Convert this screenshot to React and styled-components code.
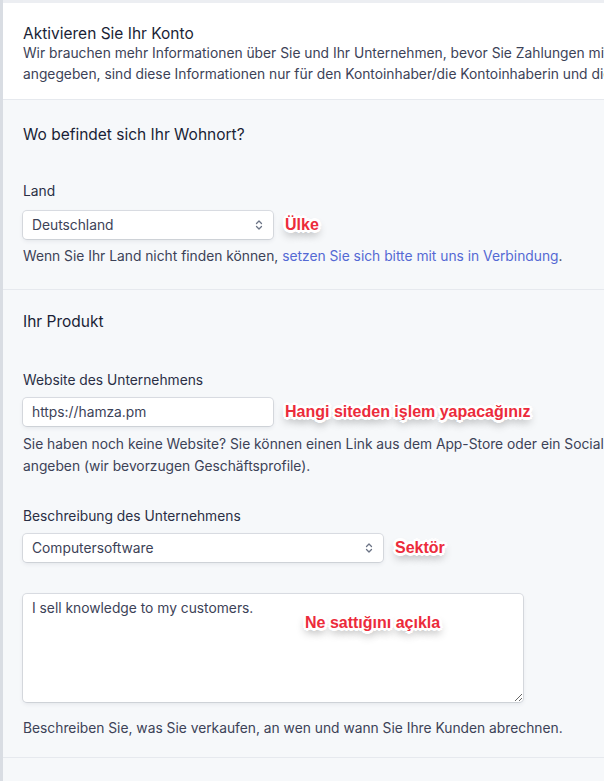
import React from "react";
import styled, { createGlobalStyle } from "styled-components";

const Global = createGlobalStyle`
  html, body { margin: 0; padding: 0; }
  body {
    background: #eceef2;
    font-family: Inter, "Noto Sans", sans-serif;
    overflow: hidden;
    width: 604px;
    height: 781px;
  }
`;

const Frame = styled.div`
  padding-top: 3px;
  padding-left: 3px;
  height: 778px;
  background: linear-gradient(to right, #d9dde3 0 3px, #eceef2 3px);
  overflow: hidden;
`;

const Card = styled.div`
  width: 800px;
  background: #f6f8fa;
  min-height: 800px;
`;

const Intro = styled.div`
  background: #fff;
  padding: 21px 20px 14px 20px;
  border-bottom: 1px solid #e6e9ee;
`;

const Title = styled.h1`
  margin: 0;
  font-size: 15.5px;
  line-height: 19px;
  font-weight: 400;
  color: #1a1f36;
`;

const Lead = styled.p`
  margin: 0;
  font-size: 13.8px;
  line-height: 21px;
  color: #3c4257;
  white-space: nowrap;
`;

const Section = styled.section`
  padding: ${(p) => p.$pt}px 20px ${(p) => p.$pb}px 20px;
  border-bottom: 1px solid #e6e9ee;
`;

const Heading = styled.h2`
  margin: 0;
  font-size: 15.5px;
  line-height: 22px;
  font-weight: 400;
  color: #1a1f36;
`;

const Field = styled.div`
  margin-top: ${(p) => p.$mt}px;
`;

const Label = styled.div`
  font-size: 13.8px;
  line-height: 20px;
  font-weight: 400;
  color: #2a2f45;
  margin-bottom: ${(p) => p.$mb || 10}px;
`;

const Row = styled.div`
  display: flex;
  align-items: center;
  gap: 12px;
`;

const Control = styled.div`
  width: ${(p) => p.$w}px;
  height: 28px;
  box-sizing: border-box;
  background: #fff;
  border-radius: 4px;
  box-shadow: 0 0 0 1px rgba(60, 66, 87, 0.14), 0 2px 4px rgba(60, 66, 87, 0.1);
  display: flex;
  align-items: center;
  justify-content: space-between;
  padding: 0 10px 0 9px;
  font-size: 13.8px;
  color: #3c4257;
`;

const TextAreaWrap = styled.div`
  position: relative;
  width: 500px;
  height: 108px;
`;

const TextArea = styled.textarea`
  width: 500px;
  height: 108px;
  box-sizing: border-box;
  border: none;
  border-radius: 4px;
  background: #fff;
  box-shadow: 0 0 0 1px rgba(60, 66, 87, 0.14), 0 2px 4px rgba(60, 66, 87, 0.1);
  padding: 4px 9px;
  font-family: Inter, "Noto Sans", sans-serif;
  font-size: 13.8px;
  line-height: 20px;
  color: #3c4257;
  resize: vertical;
  outline: none;
  display: block;
`;

const Help = styled.p`
  margin: ${(p) => p.$mt}px 0 0 0;
  font-size: 13.8px;
  line-height: ${(p) => p.$lh || 21}px;
  color: #3c4257;
  white-space: nowrap;
`;

const Link = styled.a`
  color: #5469d4;
  text-decoration: none;
`;

const Note = styled.span`
  font-family: "Liberation Sans", Arial, sans-serif;
  font-weight: 700;
  font-size: 16px;
  color: #ec2b3b;
  white-space: nowrap;
  text-shadow:
    1.5px 0 0 #fff, -1.5px 0 0 #fff, 0 1.5px 0 #fff, 0 -1.5px 0 #fff,
    1.5px 1.5px 0 #fff, -1.5px -1.5px 0 #fff, 1.5px -1.5px 0 #fff, -1.5px 1.5px 0 #fff,
    3px 0 0 #fff, -3px 0 0 #fff, 0 3px 0 #fff, 0 -3px 0 #fff,
    2px 2px 0 #fff, -2px -2px 0 #fff, 2px -2px 0 #fff, -2px 2px 0 #fff,
    0 5px 8px rgba(0, 0, 0, 0.45);
  ${(p) => p.$over && `
    position: absolute;
    left: ${p.$x}px;
    top: ${p.$y}px;
  `}
`;

const Chevron = () => (
  <svg width="8" height="12" viewBox="0 0 8 12" fill="none">
    <path d="M1.5 4.5 L4 2 L6.5 4.5" stroke="#6b7385" strokeWidth="1.3" strokeLinecap="round" strokeLinejoin="round" />
    <path d="M1.5 7.5 L4 10 L6.5 7.5" stroke="#6b7385" strokeWidth="1.3" strokeLinecap="round" strokeLinejoin="round" />
  </svg>
);

export default function App() {
  return (
    <>
      <Global />
      <Frame>
        <Card>
          <Intro>
            <Title>Aktivieren Sie Ihr Konto</Title>
            <Lead>Wir brauchen mehr Informationen über Sie und Ihr Unternehmen, bevor Sie Zahlungen mit Stripe akzeptieren können.</Lead>
            <Lead>angegeben, sind diese Informationen nur für den Kontoinhaber/die Kontoinhaberin und die Administratoren sichtbar.</Lead>
          </Intro>

          <Section $pt={24} $pb={22}>
            <Heading>Wo befindet sich Ihr Wohnort?</Heading>
            <Field $mt={35}>
              <Label>Land</Label>
              <Row>
                <Control $w={250}>
                  <span>Deutschland</span>
                  <Chevron />
                </Control>
                <Note>Ülke</Note>
              </Row>
              <Help $mt={7}>
                Wenn Sie Ihr Land nicht finden können,{" "}
                <Link href="#">setzen Sie sich bitte mit uns in Verbindung</Link>.
              </Help>
            </Field>
          </Section>

          <Section $pt={21} $pb={18}>
            <Heading>Ihr Produkt</Heading>
            <Field $mt={37}>
              <Label $mb={8}>Website des Unternehmens</Label>
              <Row>
                <Control $w={250}>
                  <span>https://hamza.pm</span>
                </Control>
                <Note>Hangi siteden işlem yapacağınız</Note>
              </Row>
              <Help $mt={7} $lh={22}>
                Sie haben noch keine Website? Sie können einen Link aus dem App-Store oder ein Social-Media-Profil
                <br />
                angeben (wir bevorzugen Geschäftsprofile).
              </Help>
            </Field>
            <Field $mt={29}>
              <Label $mb={8}>Beschreibung des Unternehmens</Label>
              <Row>
                <Control $w={360}>
                  <span>Computersoftware</span>
                  <Chevron />
                </Control>
                <Note>Sektör</Note>
              </Row>
            </Field>
            <Field $mt={32}>
              <TextAreaWrap>
                <TextArea readOnly defaultValue="I sell knowledge to my customers." />
                <Note $over $x={282} $y={20}>Ne sattığını açıkla</Note>
              </TextAreaWrap>
              <Help $mt={16}>Beschreiben Sie, was Sie verkaufen, an wen und wann Sie Ihre Kunden abrechnen.</Help>
            </Field>
          </Section>
        </Card>
      </Frame>
    </>
  );
}
